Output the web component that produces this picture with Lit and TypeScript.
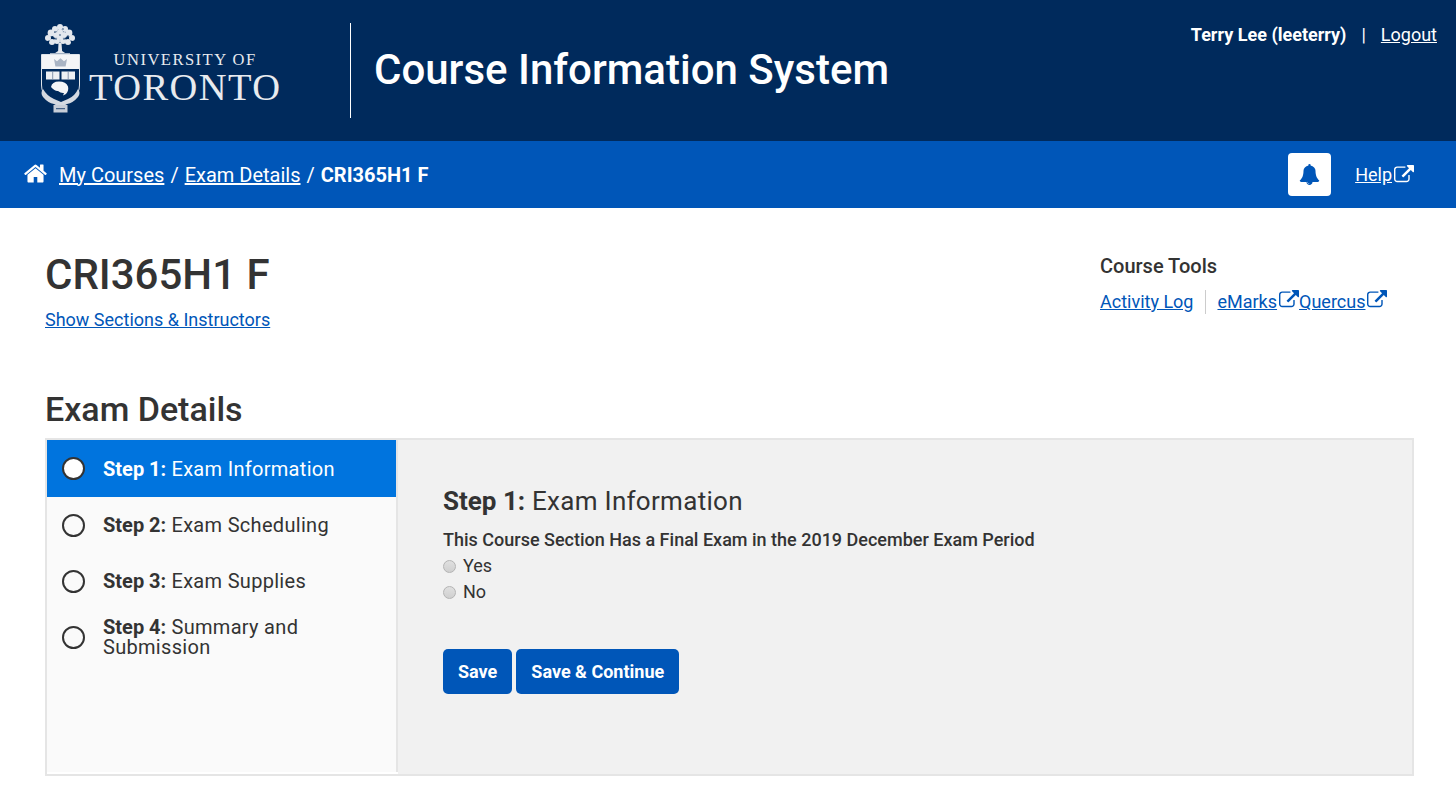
import {LitElement, html, css, svg} from 'lit';
import {customElement} from 'lit/decorators.js';

const EXT = 'M1408 928v320q0 119-84.5 203.5t-203.5 84.5h-832q-119 0-203.5-84.5t-84.5-203.5v-832q0-119 84.5-203.5t203.5-84.5h704q14 0 23 9t9 23v64q0 14-9 23t-23 9h-704q-66 0-113 47t-47 113v832q0 66 47 113t113 47h832q66 0 113-47t47-113v-320q0-14 9-23t23-9h64q14 0 23 9t9 23zm384-864v512q0 26-19 45t-45 19-45-19l-176-176-652 652q-10 10-23 10t-23-10l-114-114q-10-10-10-23t10-23l652-652-176-176q-19-19-19-45t19-45 45-19h512q26 0 45 19t19 45z';
const BELL = 'M912 1696q0-16-16-16-59 0-101.5-42.5t-42.5-101.5q0-16-16-16t-16 16q0 73 51.5 124.5t124.5 51.5q16 0 16-16zm816-288q0 52-38 90t-90 38h-448q0 106-75 181t-181 75-181-75-75-181h-448q-52 0-90-38t-38-90q50-42 91-88t85-119.5 74.5-158.5 50-206 19.5-260q0-152 117-282.5t307-158.5q-8-19-8-39 0-40 28-68t68-28 68 28 28 68q0 20-8 39 190 28 307 158.5t117 282.5q0 139 19.5 260t50 206 74.5 158.5 85 119.5 91 88z';
const HOME = 'M1472 992v480q0 26-19 45t-45 19h-384v-384h-256v384h-384q-26 0-45-19t-19-45v-480q0-1 .5-3t.5-3l575-474 575 474q1 2 1 6zm223-69l-62 74q-8 9-21 11h-3q-13 0-21-7l-692-577-692 577q-12 8-24 7-13-2-21-11l-62-74q-8-10-7-23.5t11-21.5l719-599q32-26 76-26t76 26l244 204v-195q0-14 9-23t23-9h192q14 0 23 9t9 23v408l219 182q10 8 11 21.5t-7 23.5z';

const fa = (d: string, cls: string) => html`<svg class=${cls} viewBox="0 0 1792 1792" fill="currentColor" aria-hidden="true"><path d=${d}></path></svg>`;

const leaves = [[19,4,3],[14,6,3],[24,6,3],[10,10,3.4],[28,10,3.4],[7,15,3],[31,15,3],[15,12,3],[23,12,3],[19,9,3],[11,19,3],[27,19,3],[16,18,3],[22,18,3],[19,14,3]];

const crest = svg`
  <g fill="#e4e8ee">
    ${leaves.map(([x, y, r]) => svg`<circle cx=${x} cy=${y} r=${r}></circle>`)}
    <path d="M17.5 20h3l.6 8 3 2h-10l3-2z"></path>
    <rect x="9" y="30" width="20" height="1.6" opacity=".7"></rect>
  </g>
  <g fill="#002a5c" opacity=".55">
    <circle cx="14" cy="9" r=".9"></circle><circle cx="22" cy="6" r=".9"></circle><circle cx="27" cy="13" r=".9"></circle>
    <circle cx="11" cy="14" r=".9"></circle><circle cx="19" cy="12" r=".9"></circle><circle cx="23" cy="16" r=".9"></circle>
    <circle cx="15" cy="16" r=".9"></circle><circle cx="30" cy="18" r=".8"></circle><circle cx="8" cy="18" r=".8"></circle>
  </g>
  <path d="M.5 31.5h38V62q0 9-7 13l-12 7-12-7q-7-4-7-13z" fill="#002a5c" stroke="#dfe4ea" stroke-width="1"></path>
  <rect x="1" y="32" width="37" height="14" fill="#f4f5f7"></rect>
  <path d="M13 36l3 2.2 3.500-3 3.500 3 3-2.200-1.400 7.500h-10.200z" fill="#a9b4c4"></path>
  <rect x="5" y="48.500" width="13.500" height="8" fill="#eef0f3"></rect>
  <rect x="20.500" y="48.500" width="13.500" height="8" fill="#eef0f3"></rect>
  <path d="M11.700 48.500v8M27.200 48.500v8" stroke="#6d7f99" stroke-width=".8"></path>
  <path d="M10 64q1-5.500 8-5.500 7 0 9 5 1 4-2 7.500l-3 1.500 1-2.500q-3 .5-6-2-3 .5-7-4z" fill="#f4f5f7"></path>
  <path d="M2 66q-3 4 0 8 5 6 11 7 3 1 3 3h7q0-2 3-3 6-1 11-7 3-4 0-8-3 7-10 10l-7 3-7-3q-7-3-11-10z" fill="#d4d9e1"></path>
  <rect x="12.500" y="82" width="14" height="7.500" fill="#c7cdd7"></rect>
  <path d="M15 85.700h9" stroke="#002a5c" stroke-width=".8"></path>
`;

@customElement('app-root')
export class AppRoot extends LitElement {
  static styles = css`
    :host {
      display: block;
      font-family: Roboto, "Liberation Sans", sans-serif;
      color: #333;
      background: #fff;
      min-height: 787px;
    }
    a { color: inherit; }
    .top {
      display: flex;
      justify-content: space-between;
      height: 141px;
      box-sizing: border-box;
      background: #002a5c;
      color: #fff;
      padding: 23px 19px 0 41px;
    }
    .brand { display: flex; align-items: flex-start; }
    .logo { display: flex; width: 309px; }
    .crest { width: 39px; height: 90px; }
    .wordmark {
      display: flex;
      flex-direction: column;
      align-items: center;
      margin: 27px 0 0 9px;
      font-family: "Liberation Serif", serif;
      color: #e8ebef;
    }
    .uni { font-size: 16.500px; letter-spacing: 1.500px; line-height: 19px; }
    .tor { font-size: 38.500px; letter-spacing: 1.400px; line-height: 36px; }
    .title {
      border-left: 1px solid #fff;
      height: 95px;
      padding-left: 23px;
      font-size: 42px;
      font-weight: 500;
      line-height: 93px;
      white-space: nowrap;
    }
    .user { font-size: 18px; line-height: 24px; padding-top: 0; }
    .user b { font-weight: 700; }
    .user .sep { margin: 0 15px; }
    .crumbs {
      display: flex;
      align-items: center;
      justify-content: space-between;
      height: 67px;
      box-sizing: border-box;
      background: #0056b8;
      color: #fff;
      padding: 0 42px 0 23px;
      font-size: 20px;
    }
    .path { display: flex; align-items: center; }
    .home { width: 25px; height: 25px; margin-right: 11px; margin-top: -3px; }
    .path b { font-weight: 700; }
    .slash { margin: 0 6px; }
    .actions { display: flex; align-items: center; }
    .bell {
      display: flex;
      align-items: center;
      justify-content: center;
      width: 43px;
      height: 43px;
      border-radius: 4px;
      background: #fff;
      color: #0056b8;
      margin-right: 24px;
    }
    .bell svg { width: 21px; height: 21px; }
    .help { font-size: 18px; }
    .ext { width: 20px; height: 20px; vertical-align: -1px; margin-left: 2px; }
    main { padding: 0 42px 0 45px; }
    .course { display: flex; justify-content: space-between; height: 178px; box-sizing: border-box; padding-top: 42px; }
    h1 { margin: 0; font-size: 42px; font-weight: 500; line-height: 50px; }
    .show { display: block; margin-top: 8px; color: #0056b8; font-size: 18px; line-height: 24px; }
    .caret { display: inline-block; margin-left: 5px; vertical-align: 3px; border: 6px solid transparent; border-top-color: #0056b8; border-bottom-width: 0; }
    .tools { width: 314px; padding-top: 4px; }
    .tools h2 { margin: 0; font-size: 20px; font-weight: 500; line-height: 24px; }
    .tool-links { display: flex; margin-top: 12px; color: #0056b8; font-size: 18px; line-height: 24px; }
    .tool-links a + a { border-left: 1px solid #ccc; margin-left: 12px; padding-left: 11px; }
    h2.section { margin: 0; font-size: 34px; font-weight: 500; line-height: 46px; }
    .panel { display: flex; height: 338px; box-sizing: border-box; border: 2px solid #e5e5e5; margin-top: 6px; }
    .steps { width: 351px; height: 332px; box-sizing: border-box; background: #fafafa; border-right: 2px solid #e5e5e5; flex: none; }
    .step { display: flex; align-items: center; height: 56px; padding-left: 15px; font-size: 20px; letter-spacing: .3px; line-height: 20px; }
    .step:first-child { height: 57px; background: #0074de; color: #fff; }
    .step b { font-weight: 700; letter-spacing: 0; }
    .dot { flex: none; width: 23px; height: 23px; box-sizing: border-box; border: 2px solid #333; border-radius: 50%; margin-right: 18px; background: #fff; }
    .step:not(:first-child) .dot { background: transparent; }
    .body { flex: 1; background: #f1f1f1; padding: 43px 0 0 45px; }
    .body h3 { margin: 0; font-size: 26px; font-weight: 400; line-height: 36px; letter-spacing: .3px; }
    .body h3 b { font-weight: 700; letter-spacing: 0; }
    .q { margin-top: 9px; font-size: 18px; font-weight: 500; line-height: 24px; }
    .opt { display: flex; align-items: center; height: 26px; font-size: 18px; }
    .opt input {
      appearance: none;
      width: 13px;
      height: 13px;
      margin: 3px 7px 0 0;
      border: 1px solid #b4b4b4;
      border-radius: 50%;
      background: linear-gradient(#e0e0e0, #cfcfcf);
    }
    .btns { display: flex; gap: 4px; margin-top: 45px; }
    button {
      height: 45px;
      border: 0;
      border-radius: 5px;
      background: #0056b8;
      color: #fff;
      padding: 0 15px;
      font: 700 18px Roboto, sans-serif;
    }
  `;

  render() {
    return html`
      <header class="top">
        <div class="brand">
          <div class="logo">
            <svg class="crest" viewBox="0 0 39 90">${crest}</svg>
            <div class="wordmark"><span class="uni">UNIVERSITY OF</span><span class="tor">TORONTO</span></div>
          </div>
          <div class="title">Course Information System</div>
        </div>
        <div class="user"><b>Terry Lee (leeterry)</b><span class="sep">|</span><a href="#">Logout</a></div>
      </header>
      <nav class="crumbs">
        <div class="path">
          ${fa(HOME, 'home')}
          <a href="#">My Courses</a><span class="slash">/</span><a href="#">Exam Details</a><span class="slash">/</span><b>CRI365H1 F</b>
        </div>
        <div class="actions">
          <div class="bell">${fa(BELL, '')}</div>
          <a class="help" href="#">Help</a>${fa(EXT, 'ext')}
        </div>
      </nav>
      <main>
        <section class="course">
          <div>
            <h1>CRI365H1 F</h1>
            <a class="show" href="#">Show Sections &amp; Instructors</a>
          </div>
          <div class="tools">
            <h2>Course Tools</h2>
            <div class="tool-links">
              <a href="#">Activity Log</a>
              <a href="#">eMarks</a>${fa(EXT, 'ext')}
              <a href="#">Quercus</a>${fa(EXT, 'ext')}
            </div>
          </div>
        </section>
        <h2 class="section">Exam Details</h2>
        <div class="panel">
          <div class="steps">
            <div class="step"><span class="dot"></span><span><b>Step 1:</b> Exam Information</span></div>
            <div class="step"><span class="dot"></span><span><b>Step 2:</b> Exam Scheduling</span></div>
            <div class="step"><span class="dot"></span><span><b>Step 3:</b> Exam Supplies</span></div>
            <div class="step"><span class="dot"></span><span><b>Step 4:</b> Summary and<br />Submission</span></div>
          </div>
          <div class="body">
            <h3><b>Step 1:</b> Exam Information</h3>
            <div class="q">This Course Section Has a Final Exam in the 2019 December Exam Period</div>
            <label class="opt"><input type="radio" name="final" />Yes</label>
            <label class="opt"><input type="radio" name="final" />No</label>
            <div class="btns"><button>Save</button><button>Save &amp; Continue</button></div>
          </div>
        </div>
      </main>
    `;
  }
}
